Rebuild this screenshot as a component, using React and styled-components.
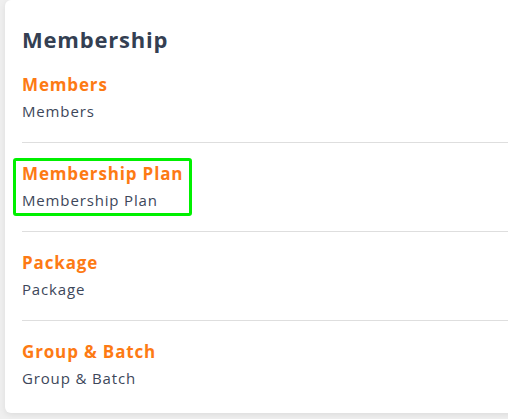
import React from 'react'
import styled, { createGlobalStyle } from 'styled-components'

const GlobalStyle = createGlobalStyle`
  html, body {
    margin: 0;
    padding: 0;
    background: #efefef;
    font-family: 'Open Sans', 'Noto Sans', sans-serif;
  }
`

const Page = styled.div`
  padding: 0 0 0 5px;
  overflow: hidden;
  height: 419px;
`

const Card = styled.div`
  background: #fff;
  border-radius: 6px;
  margin-right: -20px;
  padding: 24px 0 4px 17px;
  box-shadow: 0 2px 6px rgba(0, 0, 0, 0.08);
`

const Heading = styled.h2`
  margin: 0;
  font-size: 22px;
  line-height: 30px;
  font-weight: 700;
  letter-spacing: 0.8px;
  color: #343f52;
`

const List = styled.ul`
  list-style: none;
  margin: 0;
  padding: 0;
`

const Item = styled.li`
  padding: 18px 0;
  border-bottom: 1px solid #dedede;

  &:last-child {
    border-bottom: none;
  }
`

const Block = styled.div`
  display: inline-block;
  ${(props) =>
    props.highlighted &&
    `
    margin: -3px -9px;
    padding: 0 6px;
    border: 3px solid #00f000;
    border-radius: 3px;
  `}
`

const Title = styled.div`
  font-size: 17px;
  line-height: 26px;
  font-weight: 700;
  letter-spacing: 0.85px;
  color: #fd7a14;
`

const Subtitle = styled.div`
  font-size: 15px;
  line-height: 26px;
  letter-spacing: 0.85px;
  color: #3d475a;
`

const items = [
  { name: 'Members' },
  { name: 'Membership Plan', highlighted: true },
  { name: 'Package' },
  { name: 'Group & Batch' },
]

export default function App() {
  return (
    <Page>
      <GlobalStyle />
      <Card>
        <Heading>Membership</Heading>
        <List>
          {items.map((item) => (
            <Item key={item.name}>
              <Block highlighted={item.highlighted}>
                <Title>{item.name}</Title>
                <Subtitle>{item.name}</Subtitle>
              </Block>
            </Item>
          ))}
        </List>
      </Card>
    </Page>
  )
}
